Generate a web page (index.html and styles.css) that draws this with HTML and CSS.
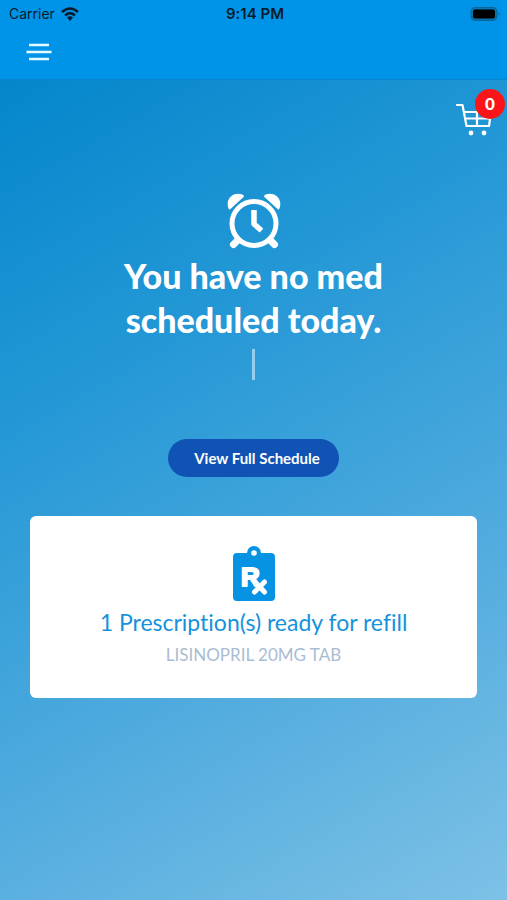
FILE: index.html
```html
<!DOCTYPE html>
<html lang="en">
<head>
<meta charset="utf-8">
<meta name="viewport" content="width=device-width, initial-scale=1">
<title>Medication schedule</title>
<link rel="stylesheet" href="styles.css">
</head>
<body>
<header class="topbar">
  <div class="status">
    <div class="carrier">
      <span>Carrier</span>
      <svg width="18" height="14" viewBox="0 0 18 14" aria-hidden="true">
        <g fill="none" stroke="#061c2c" stroke-width="2.6">
          <path d="M1 5Q9-2 17 5"/>
          <path d="M4 8.400Q9 4 14 8.400"/>
        </g>
        <path d="M6 10.600Q9 8 12 10.600L9 14Z" fill="#061c2c"/>
      </svg>
    </div>
    <time class="clock">9:14 PM</time>
    <svg class="battery" width="31" height="14" viewBox="0 0 31 14" aria-hidden="true">
      <rect x="1" y=".5" width="26" height="13" rx="4" fill="#0874b0" stroke="#0b6599"/>
      <rect x="3" y="2.500" width="22" height="9" rx="2" fill="#000"/>
      <path d="M28.500 5q2 2 0 4z" fill="#0b6599"/>
    </svg>
  </div>
  <button class="menu" type="button" aria-label="Menu">
    <svg width="26" height="18" viewBox="0 0 26 18" aria-hidden="true">
      <path d="M3 2H23M0.500 9H25.500M3 16H23" stroke="#e4fbff" stroke-width="2.4"/>
    </svg>
  </button>
</header>
<main class="page">
  <button class="cart" type="button" aria-label="Cart">
    <svg width="38" height="34" viewBox="0 0 38 34" aria-hidden="true">
      <g fill="none" stroke="#fff" stroke-width="2.2" stroke-linejoin="round" stroke-linecap="round">
        <path d="M2 2H7.500L11.500 23H34L36 9H9"/>
        <path d="M10.500 15.500H35M22 9V23"/>
      </g>
      <circle cx="16" cy="30" r="2.400" fill="#fff"/>
      <circle cx="29" cy="30" r="2.400" fill="#fff"/>
    </svg>
    <span class="badge">0</span>
  </button>
  <section class="today">
    <svg width="56" height="56" viewBox="0 0 56 56" aria-hidden="true">
      <g fill="none" stroke="#fff">
        <circle cx="28" cy="30.500" r="22" stroke-width="5"/>
        <path d="M28 17V31L35.500 37.500" stroke-width="5.500" stroke-linejoin="round"/>
        <path d="M11 48L7.500 51.500M45 48L48.500 51.500" stroke-width="7" stroke-linecap="round"/>
      </g>
      <path d="M2.500 15.500C-1 6 7-2 16.500 1.500Q19 3 17 4.500L4.500 16Q3 17 2.500 15.500Z" fill="#fff"/>
      <path d="M53.500 15.500C57 6 49-2 39.500 1.500Q37 3 39 4.500L51.500 16Q53 17 53.500 15.500Z" fill="#fff"/>
    </svg>
    <h1 class="title">You have no med<br>scheduled today.</h1>
    <div class="divider"></div>
    <button class="schedule" type="button">View Full Schedule</button>
  </section>
  <section class="card">
    <svg width="42" height="56" viewBox="0 0 42 56" aria-hidden="true">
      <rect y="7" width="42" height="48" rx="4" fill="#0693e3"/>
      <circle cx="21" cy="7" r="7" fill="#0693e3"/>
      <circle cx="21" cy="7" r="2.800" fill="#fff"/>
      <text class="rx" x="8" y="40">R</text>
      <path d="M20 34L31.500 46M31.500 36L21.500 46" fill="none" stroke="#fff" stroke-width="5" stroke-linecap="round"/>
    </svg>
    <h2 class="refill">1 Prescription(s) ready for refill</h2>
    <p class="drug">LISINOPRIL 20MG TAB</p>
  </section>
</main>
</body>
</html>
```
FILE: styles.css
```css
* {
  box-sizing: border-box;
}

body {
  margin: 0;
  min-height: 100vh;
  display: flex;
  flex-direction: column;
  font-family: Lato, sans-serif;
  font-variant-ligatures: none;
}

button {
  border: 0;
  padding: 0;
  background: none;
  font-family: inherit;
}

svg {
  display: block;
}

.topbar {
  background: #0094e8;
  border-bottom: 1px solid #0a86cd;
  padding-bottom: 10px;
}

.status {
  display: grid;
  grid-template-columns: 1fr auto 1fr;
  align-items: center;
  height: 27px;
  padding: 0 6px 0 9px;
  font-family: Inter, sans-serif;
  font-size: 14px;
  color: #061c2c;
}

.carrier {
  display: flex;
  align-items: center;
  gap: 6px;
}

.clock {
  font-size: 15px;
  font-weight: 600;
}

.battery {
  justify-self: end;
}

.menu {
  display: block;
  margin: 8px 0 0 18px;
  padding: 8px;
}

.page {
  flex: 1;
  display: flex;
  flex-direction: column;
  padding: 8px 0 24px;
  background: linear-gradient(150deg, #0486cc 0%, #2498d6 32%, #50abde 66%, #7dc1e6 100%);
}

.cart {
  position: relative;
  align-self: flex-end;
  margin-right: 14px;
  padding-top: 15px;
}

.badge {
  position: absolute;
  top: 1px;
  right: -12px;
  width: 30px;
  height: 30px;
  border-radius: 50%;
  background: #fb1518;
  color: #fff;
  font-size: 17px;
  font-weight: 900;
  line-height: 30px;
  text-align: center;
}

.today {
  display: flex;
  flex-direction: column;
  align-items: center;
  padding-top: 56px;
}

.title {
  margin: 5px 0 0;
  color: #fff;
  font-size: 34px;
  font-weight: 900;
  line-height: 44px;
  text-align: center;
}

.divider {
  width: 3px;
  height: 31px;
  margin-top: 7px;
  background: #94cdee;
}

.schedule {
  height: 38px;
  margin-top: 59px;
  padding: 0 19px 0 26px;
  border-radius: 19px;
  background: #1053b5;
  color: #fff;
  font-size: 15px;
  font-weight: 700;
}

.card {
  display: flex;
  flex-direction: column;
  align-items: center;
  margin: 39px 30px 0;
  padding: 30px 16px;
  border-radius: 6px;
  background: #fff;
  text-align: center;
}

.rx {
  font-family: "Liberation Sans", sans-serif;
  font-size: 26px;
  font-weight: 700;
  fill: #fff;
  stroke: #fff;
  stroke-width: 2px;
  stroke-linejoin: round;
}

.refill {
  margin: 4px 0 0;
  color: #1492dc;
  font-size: 23px;
  font-weight: 400;
  line-height: 32px;
}

.drug {
  margin: 4px 0 0;
  color: #a9bdd2;
  font-size: 17px;
  line-height: 26px;
}
```
